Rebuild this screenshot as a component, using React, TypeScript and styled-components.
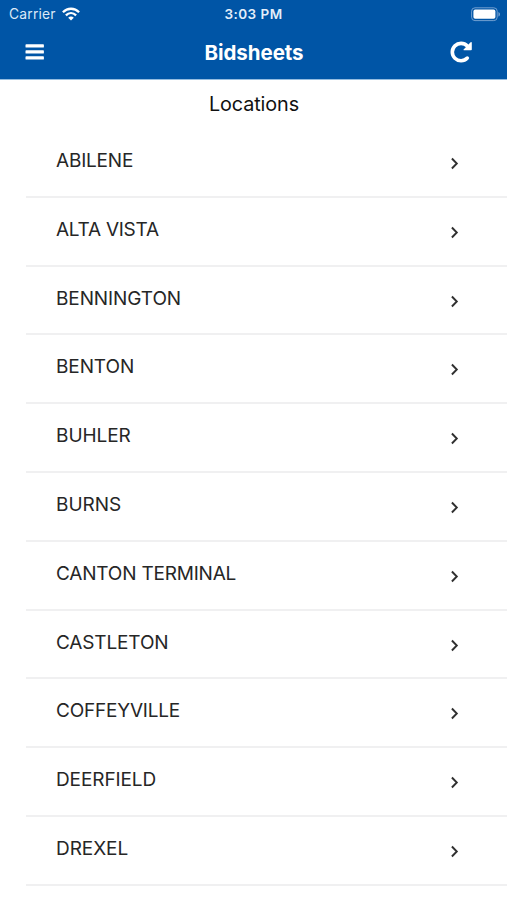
import React from "react";
import styled, { createGlobalStyle } from "styled-components";

const GlobalStyle = createGlobalStyle`
  *, *::before, *::after { box-sizing: border-box; }
  body {
    margin: 0;
    background: #fff;
    font-family: Inter, "Liberation Sans", sans-serif;
  }
`;

const Screen = styled.div`
  width: 507px;
  height: 900px;
  overflow: hidden;
  background: #fff;
`;

const Header = styled.header`
  height: 80px;
  border-bottom: 1px solid #94bce0;
  background: #0055a6;
  color: #fff;
`;

const StatusBar = styled.div`
  display: grid;
  grid-template-columns: 1fr auto 1fr;
  align-items: center;
  height: 27px;
  padding: 0 6px 0 9px;
  font-size: 13.8px;
  line-height: 28px;
`;

const Carrier = styled.div`
  display: flex;
  align-items: center;
  gap: 6px;
  color: #dce9f7;
  letter-spacing: 0.22px;

  svg { margin-bottom: 1px; }
`;

const Clock = styled.time`
  margin-right: 3px;
  font-weight: 600;
  font-size: 13.5px;
  letter-spacing: 0.45px;
  color: #e4eefa;
`;

const Battery = styled.div`
  display: flex;
  justify-content: flex-end;
`;

const NavBar = styled.nav`
  display: grid;
  grid-template-columns: 1fr auto 1fr;
  align-items: center;
  height: 51px;
  padding: 0 34px 0 25px;
`;

const Title = styled.h1`
  margin: 0 0 0 10px;
  font-size: 20.5px;
  font-weight: 700;
  line-height: 24px;
  letter-spacing: -0.05px;
`;

const IconButton = styled.button<{ $end?: boolean }>`
  display: flex;
  justify-self: ${({ $end }) => ($end ? "end" : "start")};
  padding: 0 0 1px;
  border: 0;
  background: none;
  color: inherit;
`;

const Heading = styled.h2`
  height: 49px;
  margin: 0;
  padding: 11px 0 0 1px;
  text-align: center;
  font-size: 19.8px;
  font-weight: 400;
  line-height: 26px;
  letter-spacing: -0.1px;
  color: #111;
`;

const List = styled.ul`
  margin: 0 0 0 26px;
  padding: 0;
  list-style: none;
`;

const Row = styled.li`
  display: flex;
  justify-content: space-between;
  height: 68.8px;
  padding: 19px 48px 0 30px;
  border-bottom: 2px solid #f0f0f1;
`;

const Name = styled.span<{ $tracking: number }>`
  font-size: 19px;
  line-height: 26px;
  letter-spacing: ${({ $tracking }) => $tracking}px;
  color: #262626;
  white-space: nowrap;
`;

const Chevron = styled.svg`
  margin-top: 9px;
`;

const locations = [
  { name: "ABILENE", tracking: -0.2 },
  { name: "ALTA VISTA", tracking: -0.25 },
  { name: "BENNINGTON", tracking: -0.1 },
  { name: "BENTON", tracking: -0.1 },
  { name: "BUHLER", tracking: -0.05 },
  { name: "BURNS", tracking: 0 },
  { name: "CANTON TERMINAL", tracking: -0.2 },
  { name: "CASTLETON", tracking: -0.15 },
  { name: "COFFEYVILLE", tracking: -0.2 },
  { name: "DEERFIELD", tracking: -0.1 },
  { name: "DREXEL", tracking: -0.05 },
];

export default function App() {
  return (
    <Screen>
      <GlobalStyle />
      <Header>
        <StatusBar>
          <Carrier>
            Carrier
            <svg width="18" height="14" viewBox="0 0 18 14" fill="none" stroke="#fff" strokeWidth="2.3">
              <path d="M.9 5.2C5.5.6 12.5.6 17.1 5.2" />
              <path d="M3.9 8.4c3-3 7.2-3 10.2 0" />
              <path d="M9 13.6 6.2 10.7c1.7-1.5 3.9-1.5 5.6 0Z" fill="#fff" stroke="none" />
            </svg>
          </Carrier>
          <Clock>3:03 PM</Clock>
          <Battery>
            <svg width="30" height="15" viewBox="0 0 30 15">
              <rect x=".6" y=".8" width="25.6" height="12.8" rx="3.4" fill="none" stroke="#719fd0" />
              <rect x="2.4" y="2.6" width="22" height="9.2" rx="1.8" fill="#fff" />
              <path d="M27.4 5v4.6c2.2-.8 2.2-3.8 0-4.6Z" fill="#719fd0" />
            </svg>
          </Battery>
        </StatusBar>
        <NavBar>
          <IconButton aria-label="Menu">
            <svg width="19" height="18" viewBox="0 0 19 18" fill="#fff">
              <rect x=".5" y="1.2" width="18.4" height="3.4" rx=".7" />
              <rect x=".5" y="7.2" width="18.4" height="3.4" rx=".7" />
              <rect x=".5" y="13.2" width="18.4" height="3.4" rx=".7" />
            </svg>
          </IconButton>
          <Title>Bidsheets</Title>
          <IconButton $end aria-label="Refresh">
            <svg width="23" height="22" viewBox="0 0 23 22">
              <path d="M17.3 17.1A8.7 8.7 0 1 1 17.3 5.1" fill="none" stroke="#fff" strokeWidth="3.6" strokeLinecap="round" />
              <path d="M21.8 1.4v7.1q0 .8-.8.8h-7.1q-.9-.2-.3-.9l7-7.2q.9-.6 1.2.2Z" fill="#fff" />
            </svg>
          </IconButton>
        </NavBar>
      </Header>
      <Heading>Locations</Heading>
      <List>
        {locations.map(({ name, tracking }) => (
          <Row key={name}>
            <Name $tracking={tracking}>{name}</Name>
            <Chevron width="9" height="13" viewBox="0 0 9 13">
              <path d="M1.9 1.5 6.8 6.5 1.9 11.5" fill="none" stroke="#303030" strokeWidth="1.9" />
            </Chevron>
          </Row>
        ))}
      </List>
    </Screen>
  );
}
